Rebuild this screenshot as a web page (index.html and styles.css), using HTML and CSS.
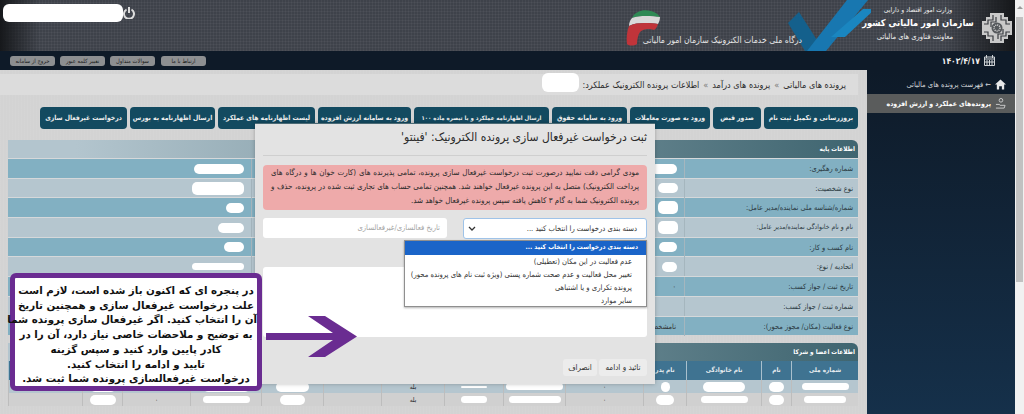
FILE: index.html
```html
<!DOCTYPE html>
<html lang="fa" dir="rtl">
<head>
    <meta charset="UTF-8">
    <title>ثبت درخواست غیرفعال سازی پرونده الکترونیک</title>
    <link rel="stylesheet" href="styles.css">
</head>
<body>
<div class="page">

    <!-- Scrollbar -->
    <div class="scrollbar">
        <div class="scroll-arrow"></div>
        <div class="scroll-thumb"></div>
    </div>

    <div class="content">

        <!-- Header -->
        <header class="header">
            <svg class="logo" viewBox="0 0 30 30">
                <path fill="#c9c9c9" d="M8 0h14v4h4v4h4v14h-4v4h-4v4H8v-4H4v-4H0V8h4V4h4z"/>
                <path fill="none" stroke="#3a3d42" stroke-width="1.2" d="M11 2v5H6v4H2M19 2v5h5v4h4M11 28v-5H6v-4H2M19 28v-5h5v-4h4M14 4v5H9v5M16 26v-5h5v-5"/>
                <circle cx="15" cy="15" r="5.5" fill="#55585c"/>
                <circle cx="15" cy="15" r="3" fill="none" stroke="#ddd" stroke-width="1.4" stroke-dasharray="1 1"/>
            </svg>
            <div class="brand">
                <div class="brand-top">وزارت امور اقتصاد و دارایی</div>
                <div class="brand-name">سازمان امور مالیاتی کشور</div>
                <div class="brand-sub">معاونت فناوری های مالیاتی</div>
            </div>
            <div class="portal-title">درگاه ملی خدمات الکترونیک سازمان امور مالیاتی</div>
            <div class="user">
                <span class="user-name"></span>
                <svg class="power" viewBox="0 0 12 12">
                    <path fill="none" stroke="#ddd" stroke-width="2" d="M3.500 2.500a5 5 0 1 0 5 0M6 0v6"/>
                </svg>
            </div>
            <svg class="check" viewBox="0 0 90 51">
                <path fill="#14608c" d="M7 23 18 12 43 51H24z"/>
                <path fill="#1877b0" d="M26 51 66 0h21L45 51z"/>
                <path fill="#1a86c0" d="M50 37 82 9h12L64 37z"/>
            </svg>
            <svg class="flag" viewBox="0 0 36 38">
                <path fill="#2f8a55" d="M8 10C11 3 20 1 27 3c4 1 7 3 9 6-8-1-20-2-28 1z"/>
                <path fill="#d9d9d9" d="M5 18c0-3 1-6 3-8 8-3 20-2 28-1 0 3-1 5-2 7-9-1-21-2-29 2z"/>
                <path fill="#c0343a" d="M5 18c8-4 20-3 29-2-1 3-2 5-4 6-5-2-11-1-14 2-2 3-3 8-3 12-3 2-8 2-10 0-1-6 0-13 2-18z"/>
            </svg>
        </header>

        <!-- Top bar -->
        <nav class="topbar">
            <div class="date">
                <svg class="calendar" viewBox="0 0 11 11">
                    <path fill="none" stroke="#cfd3d6" d="M.5 2h10v8.500H.5zM.5 4h10M2.500 0v3M8.500 0v3M3 5v5M5.500 5v5M8 5v5M1 7h9"/>
                </svg>
                <span>۱۴۰۳/۴/۱۷</span>
            </div>
            <div class="top-links">
                <a class="top-link link-wide" href="#">ارتباط با ما</a>
                <a class="top-link" href="#">سوالات متداول</a>
                <a class="top-link" href="#">تغییر کلمه عبور</a>
                <a class="top-link" href="#">خروج از سامانه</a>
            </div>
        </nav>

        <div class="layout">

            <!-- Sidebar -->
            <aside class="sidebar">
                <div class="side-item">
                    <svg class="side-icon" viewBox="0 0 12 11">
                        <path fill="#e8e8e8" d="M6 0 12 5.500h-2V11H7.500V7.500h-3V11H2V5.500H0z"/>
                    </svg>
                    <span>← فهرست پرونده های مالیاتی</span>
                </div>
                <div class="side-item side-active">
                    <svg class="side-icon" viewBox="0 0 12 12">
                        <circle cx="6.500" cy="2.500" r="2" fill="none" stroke="#cfcfcf"/>
                        <path fill="none" stroke="#cfcfcf" d="M1 7h4l1 1.500M1 11h9l1-3H6"/>
                    </svg>
                    <span>پرونده‌های عملکرد و ارزش افزوده</span>
                </div>
            </aside>

            <!-- Main -->
            <main class="main">
                <div class="breadcrumb">
                    <span>پرونده های مالیاتی</span>
                    <span class="crumb-sep">»</span>
                    <span>پرونده های درآمد</span>
                    <span class="crumb-sep">»</span>
                    <span>اطلاعات پرونده الکترونیک عملکرد:</span>
                    <span class="crumb-blob"></span>
                </div>

                <div class="tabs">
                    <a class="tab" href="#">بروزرسانی و تکمیل ثبت نام</a>
                    <a class="tab" href="#">صدور قبض</a>
                    <a class="tab" href="#">ورود به صورت معاملات</a>
                    <a class="tab" href="#">ورود به سامانه حقوق</a>
                    <a class="tab tab-long" href="#">ارسال اظهارنامه عملکرد و با تبصره ماده ۱۰۰</a>
                    <a class="tab" href="#">ورود به سامانه ارزش افزوده</a>
                    <a class="tab" href="#">لیست اظهارنامه های عملکرد</a>
                    <a class="tab" href="#">ارسال اظهارنامه به بورس</a>
                    <a class="tab" href="#">درخواست غیرفعال سازی</a>
                </div>

                <section class="panel">
                    <div class="panel-title">اطلاعات پایه</div>
                    <div class="info-row">
                        <div class="info-label">شماره رهگیری:</div>
                        <div class="info-value"><span class="blob b-26"></span></div>
                        <div class="info-label"></div>
                        <div class="info-value"><span class="blob b-50"></span></div>
                    </div>
                    <div class="info-row">
                        <div class="info-label">نوع شخصیت:</div>
                        <div class="info-value"><span class="blob b-20 pad-4"></span></div>
                        <div class="info-label"></div>
                        <div class="info-value"><span class="blob b-52 tall"></span></div>
                    </div>
                    <div class="info-row">
                        <div class="info-label">شماره/شناسه ملی نماینده/مدیر عامل:</div>
                        <div class="info-value"><span class="blob b-20 pad-4 tall"></span></div>
                        <div class="info-label"></div>
                        <div class="info-value"><span class="blob b-18"></span></div>
                    </div>
                    <div class="info-row">
                        <div class="info-label label-small">نام و نام خانوادگی نماینده/مدیر عامل:</div>
                        <div class="info-value"><span class="blob b-20 pad-4 tall"></span></div>
                        <div class="info-label"></div>
                        <div class="info-value"><span class="blob b-26"></span></div>
                    </div>
                    <div class="info-row">
                        <div class="info-label">نام کسب و کار:</div>
                        <div class="info-value"><span class="blob b-18"></span></div>
                        <div class="info-label"></div>
                        <div class="info-value"><span class="blob b-20"></span></div>
                    </div>
                    <div class="info-row">
                        <div class="info-label">اتحادیه / نوع:</div>
                        <div class="info-value"><span class="blob b-14"></span></div>
                        <div class="info-label"></div>
                        <div class="info-value"><span class="blob b-52 thin"></span></div>
                    </div>
                    <div class="info-row">
                        <div class="info-label">تاریخ ثبت / جواز کسب:</div>
                        <div class="info-value value-text">۰</div>
                        <div class="info-label"></div>
                        <div class="info-value"></div>
                    </div>
                    <div class="info-row">
                        <div class="info-label">شماره ثبت / جواز کسب:</div>
                        <div class="info-value"></div>
                        <div class="info-label"></div>
                        <div class="info-value"></div>
                    </div>
                    <div class="info-row">
                        <div class="info-label">نوع فعالیت (مکان/ مجوز محور):</div>
                        <div class="info-value value-text">نامشخص</div>
                        <div class="info-label"></div>
                        <div class="info-value"></div>
                    </div>
                </section>

                <section class="panel members">
                    <div class="panel-title">اطلاعات اعضا و شرکا</div>
                    <div class="member-head">
                        <div>شماره ملی</div>
                        <div>نام</div>
                        <div>نام خانوادگی</div>
                        <div>نام پدر</div>
                        <div></div><div></div><div></div><div></div><div></div><div></div><div></div><div></div><div></div><div></div>
                    </div>
                    <div class="member-row row-dark">
                        <div><span class="blob b-46 thin"></span></div>
                        <div><span class="blob b-14"></span></div>
                        <div><span class="blob b-42"></span></div>
                        <div><span class="blob b-9"></span></div>
                        <div>۰</div>
                        <div><span class="blob b-56 thin"></span></div>
                        <div><span class="blob b-26 hair"></span></div>
                        <div>بله</div>
                        <div></div>
                        <div><span class="blob b-38"></span></div>
                        <div><span class="blob b-46"></span></div>
                        <div>۰</div>
                        <div><span class="blob b-26"></span></div>
                        <div></div>
                    </div>
                    <div class="member-row">
                        <div><span class="blob b-42 thin"></span></div>
                        <div><span class="blob b-14"></span></div>
                        <div><span class="blob b-46 thin"></span></div>
                        <div><span class="blob b-18"></span></div>
                        <div>۰</div>
                        <div><span class="blob b-52 thin"></span></div>
                        <div><span class="blob b-26 thin"></span></div>
                        <div>بله</div>
                        <div></div>
                        <div><span class="blob b-34"></span></div>
                        <div><span class="blob b-46 thin"></span></div>
                        <div>۰</div>
                        <div><span class="blob b-26"></span></div>
                        <div></div>
                    </div>
                </section>
            </main>
        </div>
    </div>

    <!-- Modal -->
    <div class="modal">
        <h2 class="modal-title">ثبت درخواست غیرفعال سازی پرونده الکترونیک: 'فینتو'</h2>
        <hr class="modal-line">
        <p class="alert">مودی گرامی دقت نمایید درصورت ثبت درخواست غیرفعال سازی پرونده، تمامی پذیرنده های (کارت خوان ها و درگاه های پرداخت الکترونیک) متصل به این پرونده غیرفعال خواهند شد. همچنین تمامی حساب های تجاری ثبت شده در پرونده، حذف و پرونده الکترونیک شما به گام ۳ کاهش یافته سپس پرونده غیرفعال خواهد شد.</p>
        <div class="form-row">
            <div class="select-box">
                <span>دسته بندی درخواست را انتخاب کنید ...</span>
                <svg class="chevron" viewBox="0 0 8 5"><path fill="none" stroke="#333" stroke-width="1.300" d="M1 1l3 3 3-3"/></svg>
            </div>
            <div class="date-input">تاریخ فعالسازی/غیرفعالسازی</div>
        </div>
        <div class="textarea"></div>
        <div class="modal-buttons">
            <a class="modal-btn btn-ok" href="#">تائید و ادامه</a>
            <a class="modal-btn btn-cancel" href="#">انصراف</a>
        </div>

        <ul class="dropdown">
            <li class="selected">دسته بندی درخواست را انتخاب کنید ...</li>
            <li>عدم فعالیت در این مکان (تعطیلی)</li>
            <li>تغییر محل فعالیت و عدم صحت شماره پستی (ویژه ثبت نام های پرونده محور)</li>
            <li>پرونده تکراری و یا اشتباهی</li>
            <li>سایر موارد</li>
        </ul>
    </div>

    <!-- Annotation -->
    <div class="note">در پنجره ای که  اکنون باز شده است، لازم است<br>علت درخواست غیرفعال سازی و همچنین تاریخ<br>آن را انتخاب کنید. اگر غیرفعال سازی پرونده شما<br>به توضیح و ملاحضات خاصی نیاز دارد، آن را در<br>کادر پایین وارد کنید و سپس گزینه<br>تایید و ادامه را انتخاب کنید.<br>درخواست غیرفعالسازی پرونده شما ثبت شد.</div>
    <svg class="note-arrow" viewBox="0 0 92 41">
        <path fill="#6a2c91" d="M0 17h67L42 0h17l32 20.500L59 41H42l25-17H0z"/>
    </svg>
</div>
</body>
</html>
```
FILE: styles.css
```css
* {
    box-sizing: border-box;
}
body {
    margin: 0;
    width: 1024px;
    height: 414px;
    overflow: hidden;
    font-family: "DejaVu Sans Condensed", "DejaVu Sans", sans-serif;
    font-stretch: condensed;
    color: #333;
    background-color: #d2d2d2;
}
a {
    text-decoration: none;
    color: inherit;
}
.page {
    position: relative;
    display: flex;
    width: 1024px;
    height: 414px;
}

/* scrollbar */
.scrollbar {
    width: 9px;
    flex: none;
    background-color: #f1f1f1;
    padding: 0 1px;
}
.scroll-arrow {
    width: 0;
    height: 0;
    margin: 6px auto 8px;
    border: 3px solid transparent;
    border-top: none;
    border-bottom: 3px solid #9a9a9a;
}
.scroll-thumb {
    height: 265px;
    background-color: #c1c1c1;
}

.content {
    flex: 1;
    display: flex;
    flex-direction: column;
    min-width: 0;
}

/* header */
.header {
    position: relative;
    height: 51px;
    flex: none;
    display: flex;
    align-items: flex-start;
    overflow: hidden;
    padding-right: 3px;
    background-color: #3e424a;
    background-image:
        linear-gradient(to left, #15171a 0, rgba(21, 23, 26, 0) 70px),
        linear-gradient(to right, #16181b 0, rgba(22, 24, 27, 0) 40px),
        repeating-linear-gradient(0deg, rgba(255, 255, 255, 0.04) 0 1px, transparent 1px 3px),
        repeating-linear-gradient(90deg, rgba(255, 255, 255, 0.04) 0 1px, transparent 1px 3px);
}
.logo {
    width: 30px;
    height: 30px;
    margin-top: 13px;
    flex: none;
}
.brand {
    width: 122px;
    margin-right: 3px;
    color: #eee;
    text-align: center;
    position: relative;
    z-index: 1;
}
.brand-top {
    margin-top: 6px;
    font-size: 6.600px;
    line-height: 8px;
}
.brand-name {
    font-size: 9.300px;
    line-height: 17px;
    font-weight: bold;
    color: #fff;
    white-space: nowrap;
}
.brand-sub {
    font-size: 7.500px;
    line-height: 12px;
    padding-right: 6px;
}
.portal-title {
    margin-top: 34px;
    margin-right: 55px;
    font-size: 8.600px;
    line-height: 12px;
    color: #e6e6e6;
    white-space: nowrap;
    position: relative;
    z-index: 1;
}
.user {
    margin-right: auto;
    margin-left: 0;
    display: flex;
    align-items: center;
    padding: 4px 5px 0 0;
    width: 140px;
    flex-direction: row-reverse;
    justify-content: flex-end;
}
.user-name {
    width: 120px;
    height: 18px;
    background-color: #fff;
    border-radius: 6px;
    position: relative;
    z-index: 1;
    margin-left: -2px;
}
.power {
    width: 12px;
    height: 12px;
    flex: none;
}
.check {
    position: absolute;
    left: 781px;
    top: 0;
    width: 90px;
    height: 51px;
}
.flag {
    position: absolute;
    left: 624px;
    top: 8px;
    width: 36px;
    height: 38px;
}

/* top bar */
.topbar {
    height: 19px;
    flex: none;
    display: flex;
    align-items: center;
    justify-content: space-between;
    background-color: #0e1a28;
    padding: 0 20px 0 10px;
}
.date {
    display: flex;
    align-items: center;
    gap: 4px;
    color: #eee;
    font-size: 8.500px;
    font-weight: bold;
}
.calendar {
    width: 11px;
    height: 11px;
}
.top-links {
    display: flex;
    gap: 5px;
}
.top-link {
    width: 45px;
    height: 10px;
    line-height: 10px;
    border-radius: 3px;
    background-color: #8d8f91;
    color: #1c1c1c;
    font-size: 5.800px;
    text-align: center;
    white-space: nowrap;
}
.link-wide {
    margin-left: 1px;
}

.layout {
    flex: 1;
    display: flex;
    min-height: 0;
}

/* sidebar */
.sidebar {
    width: 148px;
    flex: none;
    padding-top: 5px;
    background: linear-gradient(#0e1a28, #15304a);
    color: #cfd3d6;
    font-size: 7.500px;
}
.side-item {
    height: 19px;
    display: flex;
    align-items: center;
    gap: 4px;
    padding: 0 9px 0 0;
    white-space: nowrap;
}
.side-active {
    background-color: #5a5c5c;
    color: #fff;
    font-size: 6.900px;
    font-weight: bold;
}
.side-icon {
    width: 11px;
    height: 11px;
    flex: none;
}

/* main */
.main {
    flex: 1;
    min-width: 0;
    padding: 4px 9px 0 8px;
    background-color: #d3d3d3;
    background-image: repeating-linear-gradient(90deg, rgba(255, 255, 255, 0.04) 0 1px, transparent 1px 3px);
    overflow: hidden;
}
.breadcrumb {
    height: 21px;
    margin: 0 0 0 -8px;
    padding-right: 12px;
    display: flex;
    align-items: center;
    gap: 3px;
    background-color: #dcdcdc;
    font-size: 9px;
    color: #2b2b2b;
    white-space: nowrap;
}
.crumb-sep {
    color: #777;
    margin: 0 1px;
}
.crumb-blob {
    width: 37px;
    height: 19px;
    margin-top: -5px;
    border-radius: 6px;
    background-color: #fff;
}
.tabs {
    display: grid;
    grid-template-columns: 94px 48px 80px 75px 135px 93px 97px 85px 87px;
    gap: 3px;
    margin-top: 12px;
}
.tab {
    height: 22px;
    line-height: 22px;
    border-radius: 4px;
    background-color: #134a60;
    color: #eee;
    font-size: 6.800px;
    font-weight: bold;
    text-align: center;
    white-space: nowrap;
}
.tab-long {
    font-size: 6px;
}

/* panels */
.panel {
    margin-top: 11px;
}
.panel-title {
    height: 18px;
    line-height: 18px;
    padding-right: 3px;
    border-radius: 0 6px 0 0;
    background: linear-gradient(to left, #3f6570, #b3c5ce 92%);
    color: #fff;
    font-size: 6.400px;
    font-weight: bold;
}
.info-row {
    display: grid;
    grid-template-columns: 174px 180px 253px 243px;
    height: 19.700px;
    border-top: 1px solid #d5d8da;
    background-color: #82b0c2;
}
.info-row:nth-child(odd) {
    background-color: #b5c6cf;
}
.info-label {
    padding-right: 5px;
    line-height: 19px;
    font-size: 7.400px;
    color: #2b3a42;
    white-space: nowrap;
    border-left: 1px solid #a5b6be;
}
.label-small {
    font-size: 6.800px;
}
.info-value {
    display: flex;
    align-items: center;
    padding-right: 7px;
    font-size: 7.400px;
    line-height: 19px;
    white-space: nowrap;
    overflow: hidden;
}
.value-text {
    padding-right: 8px;
}
.blob {
    display: block;
    height: 10px;
    border-radius: 5px;
    background-color: #fff;
}
.b-9 { width: 9px; }
.b-14 { width: 15px; }
.b-18 { width: 18px; }
.b-20 { width: 20px; }
.b-26 { width: 26px; }
.b-34 { width: 25px; }
.b-38 { width: 33px; }
.b-42 { width: 42px; }
.b-46 { width: 47px; }
.b-50 { width: 50px; }
.b-52 { width: 52px; }
.b-56 { width: 57px; }
.tall { height: 13px; }
.thin { height: 7px; }
.hair { height: 2px; }
.pad-4 { margin-right: -1px; }

/* members table */
.members {
    margin-top: 8px;
}
.member-head,
.member-row {
    display: grid;
    grid-template-columns: 67px 30px 75px 43px 78px 62px 59px 63px 58px 62px 71px 68px 40px 74px;
}
.member-head {
    height: 19px;
    background-color: #3f7391;
    color: #e8edf0;
    font-size: 6.400px;
    font-weight: bold;
}
.member-head > div {
    line-height: 19px;
    text-align: center;
    border-left: 1px solid #a9c0cd;
    white-space: nowrap;
}
.member-row {
    height: 13px;
    font-size: 6.500px;
    background-color: #d0d0d0;
    color: #222;
}
.member-row > div {
    display: flex;
    align-items: center;
    justify-content: center;
    border-left: 1px solid #bdbdbd;
}
.row-dark {
    background-color: #b5c6cf;
}

/* modal */
.modal {
    position: absolute;
    left: 255px;
    top: 123px;
    width: 400px;
    height: 261px;
    padding: 0 8px;
    background-color: #e3e3e3;
    border-top: 1px solid #4a6a75;
    box-shadow: 0 0 4px rgba(0, 0, 0, 0.25);
}
.modal-title {
    margin: 0;
    height: 31px;
    line-height: 27px;
    font-size: 12px;
    font-weight: normal;
    color: #2c2c2c;
    white-space: nowrap;
}
.modal-line {
    margin: 0 0 9px;
    border: none;
    border-top: 1px solid #cfcfcf;
}
.alert {
    margin: 0;
    height: 45px;
    padding: 1px 8px 0;
    border-radius: 4px;
    background-color: #eeaaaa;
    font-size: 7.950px;
    line-height: 14px;
    text-align: justify;
    color: #2b2b2b;
}
.form-row {
    display: flex;
    justify-content: space-between;
    margin-top: 8px;
}
.select-box {
    width: 184px;
    height: 21px;
    display: flex;
    align-items: center;
    justify-content: space-between;
    padding: 0 9px 0 4px;
    border: 1px solid #9fc3e8;
    border-radius: 3px;
    background-color: #fff;
    font-size: 7.600px;
    color: #333;
}
.chevron {
    width: 8px;
    height: 5px;
}
.date-input {
    width: 184px;
    height: 20px;
    line-height: 20px;
    padding-right: 7px;
    border-radius: 3px;
    background-color: #fff;
    font-size: 7.600px;
    color: #a5a5a5;
}
.textarea {
    height: 70px;
    margin-top: 28px;
    border-radius: 3px;
    background-color: #fff;
}
.modal-buttons {
    display: flex;
    gap: 2px;
    margin-top: 22px;
}
.modal-btn {
    height: 17px;
    line-height: 17px;
    border-radius: 3px;
    background-color: #ececec;
    font-size: 8px;
    color: #333;
    text-align: center;
}
.btn-ok {
    width: 48px;
}
.btn-cancel {
    width: 34px;
}
.dropdown {
    position: absolute;
    left: 149px;
    top: 116px;
    width: 243px;
    height: 67px;
    margin: 0;
    padding: 0;
    list-style: none;
    border: 1px solid #8f8f8f;
    background-color: #fff;
    box-shadow: 0 1px 2px rgba(0, 0, 0, 0.3);
    font-size: 7.600px;
    color: #333;
}
.dropdown li {
    height: 13px;
    line-height: 13px;
    padding-right: 14px;
    white-space: nowrap;
}
.dropdown .selected {
    height: 14px;
    padding-right: 8px;
    background-color: #1a64c8;
    color: #fff;
    font-size: 6.600px;
    font-weight: bold;
}

/* annotation */
.note {
    position: absolute;
    left: 10px;
    top: 273px;
    width: 252px;
    height: 118px;
    padding: 5px 0 0;
    border: 5px solid #6a2c91;
    border-radius: 6px;
    background-color: #fff;
    font-family: "DejaVu Sans", sans-serif;
    font-stretch: normal;
    font-size: 10.300px;
    font-weight: bold;
    line-height: 14.700px;
    color: #111;
    text-align: center;
    white-space: nowrap;
}
.note-arrow {
    position: absolute;
    left: 266px;
    top: 316px;
    width: 92px;
    height: 41px;
}
```
